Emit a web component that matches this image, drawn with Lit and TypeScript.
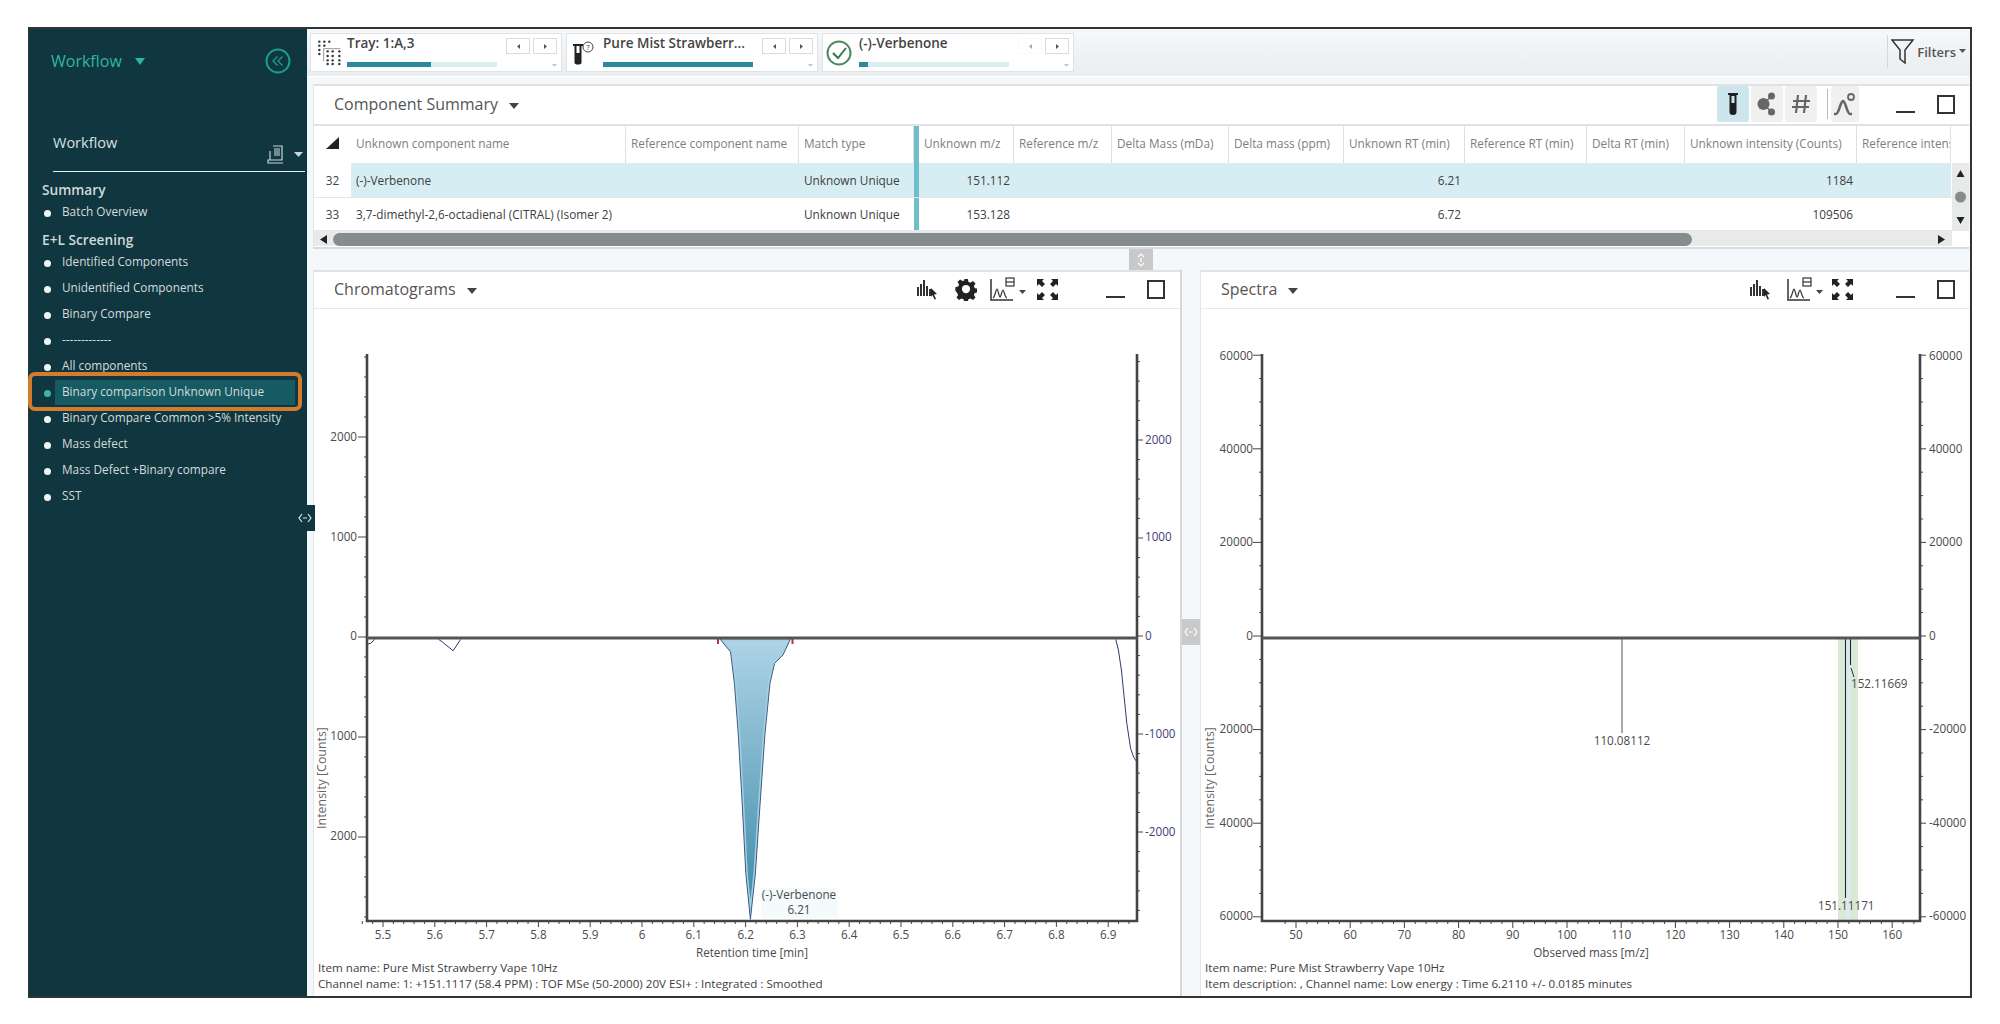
import { LitElement, html, css, svg } from "lit";
import { customElement } from "lit/decorators.js";

const FONT = css`"Open Sans", "Noto Sans", sans-serif`;

// table columns: width, label, align of the cell values
const columns = [
  { w: 275, label: "Unknown component name" },
  { w: 173, label: "Reference component name" },
  { w: 115, label: "Match type" },
  { w: 100, label: "Unknown m/z", teal: true },
  { w: 98, label: "Reference m/z" },
  { w: 117, label: "Delta Mass (mDa)" },
  { w: 115, label: "Delta mass (ppm)" },
  { w: 121, label: "Unknown RT (min)" },
  { w: 122, label: "Reference RT (min)" },
  { w: 98, label: "Delta RT (min)" },
  { w: 172, label: "Unknown intensity (Counts)" },
  { w: 94, label: "Reference intensity" },
];

const rows = [
  {
    num: "32",
    selected: true,
    h: 35,
    cells: ["(-)-Verbenone", "", "Unknown Unique", "151.112", "", "", "", "6.21", "", "", "1184", ""],
  },
  {
    num: "33",
    selected: false,
    h: 33,
    cells: ["3,7-dimethyl-2,6-octadienal (CITRAL) (Isomer 2)", "", "Unknown Unique", "153.128", "", "", "", "6.72", "", "", "109506", ""],
  },
];

const workflowItems = [
  "Identified Components",
  "Unidentified Components",
  "Binary Compare",
  "-------------",
  "All components",
  "Binary comparison Unknown Unique",
  "Binary Compare Common >5% Intensity",
  "Mass defect",
  "Mass Defect +Binary compare",
  "SST",
];

// helpers to turn zoomed reference readings into page coordinates
const pts = (list: number[][], ox: number, oy: number) =>
  list.map(([x, y]) => `${(ox + x / 2.613).toFixed(1)},${(oy + y / 3).toFixed(1)}`).join(" ");

const peak = pts(
  [
    [1097, 116], [1112, 138], [1125, 155], [1135, 250], [1145, 400], [1155, 600], [1165, 820], [1177, 958],
    [1190, 820], [1200, 650], [1215, 400], [1228, 250], [1240, 190], [1262, 165], [1282, 116],
  ],
  300,
  600
);
const dipA = pts([[175, 133], [185, 130], [195, 118]], 300, 600);
const dipB = pts([[362, 118], [372, 126], [400, 152], [420, 118]], 300, 600);
const riseEnd = pts(
  [[1243, 58], [1250, 90], [1258, 150], [1265, 230], [1272, 310], [1282, 385], [1290, 412], [1298, 425]],
  640,
  620
);

const vial = html`<svg width="10" height="24" viewBox="0 0 10 24">
  <path d="M0 1h10v2H8.500v17a3.500 3 0 0 1-7 0V3H0z" fill="#1f1f1f" />
  <rect x="3.500" y="4" width="3" height="7" fill="#cde5ec" />
</svg>`;

const barsCursor = html`<svg class="ic" width="22" height="21" viewBox="0 0 22 21">
  <path d="M1 8v9M4 5v12M7 1v16M10 7v10M13 10v7" stroke="#333" stroke-width="2" fill="none" />
  <path d="M14 9l6 6-3 .5 2 4.500-1.500.5-2-4.500-1.500 2z" fill="#222" />
</svg>`;

const chartIcon = html`<svg class="ic" width="36" height="24" viewBox="0 0 36 24">
  <path d="M1 2v21h22" stroke="#333" stroke-width="1.500" fill="none" />
  <path d="M3 21c2-1 3-9 4-9s2 8 3 8 2-7 3-7 2 8 4 8" stroke="#333" stroke-width="1.200" fill="none" />
  <rect x="16" y="1" width="8" height="8" fill="none" stroke="#333" stroke-width="1.200" />
  <path d="M16 5h8" stroke="#333" stroke-width="1.200" />
  <path d="M29 13h7l-3.500 4z" fill="#444" />
</svg>`;

const expandIcon = html`<svg class="ic" width="23" height="23" viewBox="0 0 23 23">
  <path d="M1 1h7l-2 2 3 3-3 3-3-3-2 2zM22 1h-7l2 2-3 3 3 3 3-3 2 2zM1 22h7l-2-2 3-3-3-3-3 3-2-2zM22 22h-7l2-2-3-3 3-3 3 3 2-2z" fill="#222" />
</svg>`;

const gear = html`<svg class="ic" width="22" height="24" viewBox="0 0 24 24">
  <path fill="#222" fill-rule="evenodd" d="M10 1h4l.6 3.100 2.300 1 2.700-1.800 2.800 2.800-1.800 2.700 1 2.300 3.100.6v4l-3.100.6-1 2.300 1.800 2.700-2.800 2.800-2.700-1.800-2.300 1-.6 3.100h-4l-.6-3.100-2.300-1-2.700 1.800-2.800-2.800 1.800-2.700-1-2.300L.4 14v-4l3.100-.6 1-2.300-1.800-2.700 2.800-2.800 2.700 1.800 2.300-1zM12 7.500a4.500 4.500 0 1 0 0 9 4.500 4.500 0 0 0 0-9z" />
</svg>`;

const windowBtns = (kind: string) => html`<span class="win ${kind}">
  <i class="min"></i>
  <i class="max"></i>
</span>`;

@customElement("nav-card")
class NavCard extends LitElement {
  static properties = {
    label: { type: String },
    fill: { type: Number },
    faded: { type: Boolean },
  };
  declare label: string;
  declare fill: number;
  declare faded: boolean;

  constructor() {
    super();
    this.label = "";
    this.fill = 0;
    this.faded = false;
  }

  static styles = css`
    :host {
      display: flex;
      width: 252px;
      height: 39px;
      box-sizing: border-box;
      background: #fff;
      border: 1px solid #dfe3e5;
      position: relative;
      font-family: ${FONT};
    }
    .icon {
      width: 36px;
      flex: none;
      display: flex;
      align-items: center;
      justify-content: center;
    }
    .body {
      display: flex;
      flex-direction: column;
      width: 150px;
      flex: none;
    }
    .label {
      font-size: 13.500px;
      line-height: 18px;
      font-weight: 600;
      color: #444;
      white-space: nowrap;
      height: 28px;
    }
    .track {
      height: 5px;
      background: #d8eef1;
    }
    .track i {
      display: block;
      height: 100%;
      background: #2b8a97;
    }
    .btns {
      display: flex;
      gap: 3px;
      padding: 4px 0 0 9px;
    }
    .btn {
      width: 24px;
      height: 16px;
      box-sizing: border-box;
      border: 1px solid #dcdcdc;
      background: #fff;
      display: flex;
      align-items: center;
      justify-content: center;
    }
    .btn.off {
      border-color: #f4f4f4;
      opacity: 0.5;
    }
    .drop {
      position: absolute;
      right: 3px;
      bottom: 3px;
    }
  `;

  render() {
    return html`
      <div class="icon"><slot></slot></div>
      <div class="body">
        <div class="label">${this.label}</div>
        <div class="track"><i style="width:${this.fill}%"></i></div>
      </div>
      <div class="btns">
        <span class="btn ${this.faded ? "off" : ""}">
          <svg width="5" height="7"><path d="M4 1v5L1 3.500z" fill="#555" /></svg>
        </span>
        <span class="btn">
          <svg width="5" height="7"><path d="M1 1v5l3-2.500z" fill="#555" /></svg>
        </span>
      </div>
      <svg class="drop" width="7" height="5"><path d="M1 1h5L3.500 4z" fill="#c4c8ca" /></svg>
    `;
  }
}

@customElement("app-root")
export class AppRoot extends LitElement {
  static styles = css`
    :host {
      display: block;
      width: 2000px;
      height: 1024px;
      background: #fff;
      font-family: ${FONT};
      overflow: hidden;
    }
    .frame {
      margin: 27px 0 0 28px;
      width: 1944px;
      height: 971px;
      box-sizing: border-box;
      border: 2px solid #333;
      border-left-width: 1px;
      display: flex;
    }
    .side {
      width: 278px;
      flex: none;
      background: #10363f;
      position: relative;
      color: #d2dcde;
      padding-left: 13px;
      box-sizing: border-box;
    }
    .side-top {
      display: flex;
      align-items: center;
      height: 64px;
      padding-left: 9px;
      color: #2fb5a3;
      font-size: 16px;
    }
    .side-top svg.car {
      margin-left: 13px;
    }
    .collapse {
      position: absolute;
      left: 236px;
      top: 19px;
    }
    .side-head {
      margin: 0 2px 0 11px;
      height: 79px;
      padding-top: 40px;
      box-sizing: border-box;
      border-bottom: 1.500px solid #e8eeee;
      font-size: 14.500px;
      line-height: 20px;
      color: #d8e0e1;
      position: relative;
    }
    .side-head svg {
      position: absolute;
      left: 214px;
      top: 51px;
    }
    .group {
      font-size: 13.700px;
      font-weight: 600;
      line-height: 20px;
      color: #cfdadb;
      margin-top: 8px;
    }
    .group.second {
      margin-bottom: -2px;
    }
    .item {
      display: flex;
      align-items: center;
      height: 26px;
      font-size: 11.800px;
      white-space: nowrap;
      position: relative;
    }
    .item.lead {
      height: 22px;
    }
    .item .dot {
      width: 7px;
      height: 7px;
      border-radius: 50%;
      background: #f2f5f5;
      margin: 4px 11px 0 2px;
      flex: none;
    }
    .item.active::before {
      content: "";
      position: absolute;
      left: 13px;
      right: 12px;
      top: 2px;
      height: 25px;
      background: #165a62;
    }
    .item.active::after {
      content: "";
      position: absolute;
      left: -14px;
      width: 274px;
      top: -6px;
      height: 39px;
      box-sizing: border-box;
      border: 4px solid #d37c2d;
      border-radius: 7px;
    }
    .item.active .dot {
      background: #3fb3a4;
      position: relative;
    }
    .item span {
      position: relative;
    }
    .handle {
      position: absolute;
      right: -8px;
      top: 476px;
      width: 20px;
      height: 26px;
      background: #10363f;
      display: flex;
      align-items: center;
      justify-content: center;
    }
    .main {
      flex: 1;
      min-width: 0;
      display: flex;
      flex-direction: column;
      background: #f5f8fa;
    }
    .toolbar {
      height: 47px;
      flex: none;
      box-sizing: border-box;
      padding: 4px 0 0 3px;
      display: flex;
      gap: 4px;
      background: linear-gradient(#f6f9fb, #e9edef);
      position: relative;
    }
    .filters {
      position: absolute;
      right: 4px;
      top: 6px;
      height: 33px;
      border-left: 1px solid #d4d8da;
      padding-left: 3px;
      display: flex;
      align-items: center;
      gap: 2px;
      font-size: 13px;
      font-weight: 600;
      color: #555;
    }
    .content {
      flex: 1;
      min-height: 0;
      padding: 7px 1px 0 6px;
      display: flex;
      flex-direction: column;
      border-top: 1px solid #fff;
    }
    .panel {
      background: #fff;
      border-top: 2px solid #e0e3e5;
      border-left: 1px solid #e3e5e7;
      display: flex;
      flex-direction: column;
      box-sizing: border-box;
    }
    .summary {
      height: 165px;
      flex: none;
      border-bottom: 2px solid #d8dbdd;
    }
    .phead {
      height: 38px;
      flex: none;
      display: flex;
      align-items: center;
      padding: 0 0 2px 20px;
      color: #555;
      font-size: 16px;
      position: relative;
      box-sizing: border-box;
    }
    .phead.line {
      border-bottom: 1px solid #e6e8e9;
      height: 37px;
    }
    .phead .car {
      margin-left: 11px;
      margin-top: 4px;
    }
    .tools {
      margin-left: auto;
      display: flex;
      align-items: center;
    }
    .ic {
      display: block;
    }
    .gap-8 {
      width: 8px;
    }
    .gap-10 {
      width: 10px;
    }
    .gap-13 {
      width: 13px;
    }
    .gap-15 {
      width: 15px;
    }
    .gap-16 {
      width: 16px;
    }
    .win {
      display: flex;
      align-items: center;
      gap: 22px;
      margin-right: 14px;
    }
    .win.top {
      margin-left: 35px;
    }
    .win.chrom-win {
      margin-left: 47px;
      margin-right: 15px;
    }
    .win.spec-win {
      margin-left: 42px;
    }
    .win .min {
      width: 19px;
      height: 2px;
      background: #333;
      margin-top: 15px;
    }
    .win .max {
      width: 14px;
      height: 15px;
      border: 2px solid #333;
      display: block;
    }
    .tbtn {
      width: 32px;
      height: 36px;
      margin-right: 2px;
      background: #f0f0f0;
      border-radius: 2px;
      display: flex;
      align-items: center;
      justify-content: center;
    }
    .tbtn.on {
      background: #cde5ec;
    }
    .tbtn.narrow {
      width: 28px;
    }
    .tsep {
      width: 1px;
      height: 30px;
      background: #bbb;
      margin: 0 3px 0 8px;
    }
    .table {
      position: relative;
      display: flex;
      flex-direction: column;
      flex: 1;
      min-height: 0;
      border-top: 2px solid #dfe2e4;
      overflow: hidden;
    }
    .tr {
      display: flex;
      align-items: center;
      flex: none;
    }
    .thead {
      height: 37px;
    }
    .tbody {
      border-bottom: 1px solid #e4e7e9;
      box-sizing: border-box;
    }
    .tbody.sel .cell {
      background: #d6eef3;
    }
    .num {
      width: 37px;
      flex: none;
      text-align: center;
      font-size: 11.800px;
      color: #444;
    }
    .th,
    .cell {
      flex: none;
      box-sizing: border-box;
      height: 100%;
      display: flex;
      align-items: center;
      white-space: nowrap;
      overflow: hidden;
      font-size: 11.800px;
      padding: 0 4px 0 5px;
    }
    .th {
      color: #7b7f82;
      border-right: 1px solid #dee1e3;
      padding-bottom: 3px;
    }
    .cell {
      color: #404040;
    }
    .cell.right {
      justify-content: flex-end;
    }
    .teal {
      border-left: 5px solid #6fbfca;
    }
    .sort {
      width: 37px;
      flex: none;
      display: flex;
      justify-content: center;
      padding-bottom: 3px;
    }
    .hbar {
      height: 15px;
      margin-right: 17px;
      background: #e8eaea;
      position: relative;
      flex: none;
    }
    .hbar .thumb {
      position: absolute;
      left: 19px;
      width: 1359px;
      top: 2px;
      height: 13px;
      background: #868c8e;
      border-radius: 7px;
    }
    .hbar svg {
      position: absolute;
      top: 4px;
    }
    .hbar .prev {
      left: 6px;
    }
    .hbar .next {
      right: 6px;
    }
    .vbar {
      position: absolute;
      right: 0;
      width: 17px;
      top: 37px;
      height: 68px;
      background: #e8eaea;
    }
    .split-h {
      height: 21px;
      flex: none;
      display: flex;
      justify-content: flex-start;
      padding-left: 816px;
    }
    .split-h span {
      width: 24px;
      height: 21px;
      background: #c9c9c9;
      display: flex;
      align-items: center;
      justify-content: center;
    }
    .bottom {
      flex: 1;
      min-height: 0;
      display: flex;
    }
    .chrom {
      width: 867px;
      flex: none;
    }
    .spec {
      flex: 1;
      min-width: 0;
    }
    .split-v {
      width: 20px;
      flex: none;
      border-left: 2px solid #d6d8da;
      box-sizing: border-box;
      padding-top: 349px;
    }
    .split-v span {
      display: flex;
      width: 18px;
      height: 26px;
      background: #c9c9c9;
      align-items: center;
      justify-content: center;
    }
    .plot {
      display: block;
      flex: none;
    }
    .plot text {
      font-family: ${FONT};
      font-size: 11.700px;
      fill: #4a4a4a;
    }
    .plot text.navy {
      fill: #3f3f7a;
    }
    .plot text.ytitle {
      font-size: 12.400px;
      fill: #666;
    }
    .info {
      font-size: 11.650px;
      line-height: 16px;
      color: #3e3e3e;
      white-space: nowrap;
      padding-left: 4px;
    }
  `;

  private sidebar() {
    return html`
      <aside class="side">
        <div class="side-top">
          Workflow
          <svg class="car" width="10" height="7"><path d="M0 0h10L5 7z" fill="#2fb5a3" /></svg>
        </div>
        <svg class="collapse" width="26" height="26" viewBox="0 0 26 26">
          <circle cx="13" cy="13" r="11.500" fill="none" stroke="#1c9c8e" stroke-width="2" />
          <path d="M12.500 8.500L8 13l4.500 4.500M17.500 8.500L13 13l4.500 4.500" fill="none" stroke="#1c9c8e" stroke-width="1.300" />
        </svg>
        <div class="side-head">
          Workflow
          <svg width="36" height="20" viewBox="0 0 36 20">
            <path d="M6 2h9v14H1v3h15" fill="none" stroke="#c9d5d7" stroke-width="1.200" />
            <path d="M3 7v9" stroke="#c9d5d7" stroke-width="1.200" />
            <rect x="7" y="4" width="6" height="8" fill="#73888c" />
            <path d="M27 8h9l-4.500 5z" fill="#c9d5d7" />
          </svg>
        </div>
        <div class="group">Summary</div>
        <div class="item lead"><i class="dot"></i><span>Batch Overview</span></div>
        <div class="group second">E+L Screening</div>
        ${workflowItems.map(
          (label, i) => html`<div class="item ${i === 5 ? "active" : ""}">
            <i class="dot"></i><span>${label}</span>
          </div>`
        )}
        <div class="handle">
          <svg width="14" height="10" viewBox="0 0 14 10">
            <path d="M4 1L1 5l3 4M10 1l3 4-3 4M5 5h4" fill="none" stroke="#dfe7e8" stroke-width="1.200" />
          </svg>
        </div>
      </aside>
    `;
  }

  private toolbar() {
    // tray icon: plate of dots, coordinates read off the zoomed reference
    const dots = [
      [25, 35], [40, 35], [55, 35],
      [25, 47], [40, 47],
      [25, 60], [25, 72],
      [50, 64], [65, 64], [85, 64],
      [50, 78], [65, 78], [85, 78],
      [50, 91], [65, 91], [85, 91],
      [50, 102], [65, 102], [85, 102],
    ];
    return html`
      <div class="toolbar">
        <nav-card label="Tray: 1:A,3" fill="56">
          <svg width="24" height="26" viewBox="18 30 72 78">
            ${dots.map(([x, y]) => svg`<circle cx=${x} cy=${y} r="3.600" fill="#333" />`)}
            <path d="M38 56h50M38 56v38" stroke="#333" stroke-width="1.500" fill="none" />
          </svg>
        </nav-card>
        <nav-card label="Pure Mist Strawberr..." fill="100">
          <svg width="26" height="24" viewBox="0 0 26 24">
            <path d="M1 3h10v2H9.500v16.500a3.500 2 0 0 1-7 0V5H1z" fill="#222" />
            <rect x="4.500" y="5" width="3" height="7" fill="#fff" />
            <circle cx="16" cy="6" r="5" fill="none" stroke="#444" />
            <text x="16" y="9" font-size="8" text-anchor="middle" fill="#333" font-family="Open Sans">?</text>
          </svg>
        </nav-card>
        <nav-card label="(-)-Verbenone" fill="6" faded>
          <svg width="26" height="26" viewBox="0 0 26 26" style="margin-right:4px">
            <circle cx="13" cy="13" r="11.500" fill="none" stroke="#4d8a5f" stroke-width="2" />
            <path d="M7 13l5 5 8-10" fill="none" stroke="#2e7a4a" stroke-width="2" />
          </svg>
        </nav-card>
        <div class="filters">
          <svg width="24" height="25" viewBox="0 0 24 25">
            <path d="M1 1h21l-8 10v13l-5-4v-9z" fill="none" stroke="#333" stroke-width="1.500" />
          </svg>
          Filters
          <svg width="7" height="5" style="margin-left:1px"><path d="M0 0h7L3.500 4z" fill="#555" /></svg>
        </div>
      </div>
    `;
  }

  private summary() {
    return html`
      <section class="panel summary">
        <div class="phead">
          Component Summary
          <svg class="car" width="10" height="6"><path d="M0 0h10L5 6z" fill="#444" /></svg>
          <div class="tools">
            <span class="tbtn on">${vial}</span>
            <span class="tbtn">
              <svg width="20" height="24" viewBox="0 0 20 24">
                <path d="M6 12L15 4M6 12l9 8" stroke="#666" stroke-width="1.500" />
                <circle cx="6.500" cy="12" r="6" fill="#666" />
                <circle cx="14.500" cy="4" r="3.500" fill="#666" />
                <circle cx="14.500" cy="20" r="3.500" fill="#666" />
              </svg>
            </span>
            <span class="tbtn">
              <svg width="20" height="24" viewBox="0 0 20 24">
                <path d="M7 3L5 21M15 3l-2 18M2 9h17M1 15h17" stroke="#666" stroke-width="2.200" fill="none" />
              </svg>
            </span>
            <span class="tsep"></span>
            <span class="tbtn narrow">
              <svg width="24" height="26" viewBox="0 0 24 26">
                <path d="M1 23h2c3 0 4-12 7-13 3 1 4 13 7 13h2" fill="none" stroke="#666" stroke-width="2.600" />
                <circle cx="18" cy="6" r="3" fill="none" stroke="#666" stroke-width="1.800" />
              </svg>
            </span>
            ${windowBtns("top")}
          </div>
        </div>
        <div class="table">
          <div class="tr thead">
            <span class="sort">
              <svg width="13" height="12"><path d="M13 0v12H0z" fill="#222" /></svg>
            </span>
            ${columns.map(
              (c) => html`<div class="th ${c.teal ? "teal" : ""}" style="width:${c.w}px">${c.label}</div>`
            )}
          </div>
          ${rows.map(
            (r) => html`<div class="tr tbody ${r.selected ? "sel" : ""}" style="height:${r.h}px">
              <span class="num">${r.num}</span>
              ${columns.map((c, i) => {
                const right = i >= 3;
                return html`<div
                  class="cell ${right ? "right" : ""} ${c.teal ? "teal" : ""}"
                  style="width:${c.w}px"
                >
                  ${r.cells[i]}
                </div>`;
              })}
            </div>`
          )}
          <div class="hbar">
            <svg class="prev" width="8" height="9"><path d="M7 0v9L0 4.500z" fill="#222" /></svg>
            <div class="thumb"></div>
            <svg class="next" width="8" height="9"><path d="M0 0v9l7-4.500z" fill="#222" /></svg>
          </div>
          <div class="vbar">
            <svg width="17" height="68" viewBox="0 0 17 68">
              <path d="M8.500 7l4 7h-8zM8.500 61l4-7h-8z" fill="#222" />
              <circle cx="8.500" cy="34" r="5.500" fill="#868c8e" />
            </svg>
          </div>
        </div>
      </section>
    `;
  }

  private chromPlot() {
    const x0 = 367;
    const x1 = 1137;
    const top = 354;
    const zero = 638;
    const bottom = 921;
    const leftTicks = [];
    for (let i = -14; i <= 14; i++) {
      const y = zero + i * 20 - 1;
      if (y < top || y > bottom) continue;
      const major = i % 5 === 0;
      leftTicks.push(svg`<path d="M${x0 - (major ? 9 : 3)} ${y}H${x0}" stroke="#444" />`);
    }
    const rightTicks = [];
    for (let i = -14; i <= 14; i++) {
      const y = 636 + i * 19.6;
      if (y < top || y > bottom) continue;
      const major = i % 5 === 0;
      rightTicks.push(svg`<path d="M${x1} ${y}h${major ? 6 : 3}" stroke="#444" />`);
    }
    const xTicks = [];
    for (let i = -2; i < 75; i++) {
      const x = 383 + i * 10.36;
      if (x > x1) break;
      const major = i % 5 === 0;
      xTicks.push(svg`<path d="M${x} ${bottom}v${major ? 6 : 3}" stroke="#444" />`);
    }
    const xLabels = ["5.5", "5.6", "5.7", "5.8", "5.9", "6", "6.1", "6.2", "6.3", "6.4", "6.5", "6.6", "6.7", "6.8", "6.9"];
    return html`<svg class="plot" width="866" height="651" viewBox="314 309 866 651">
      <defs>
        <linearGradient id="peakFill" x1="0" y1="0" x2="0" y2="1">
          <stop offset="0" stop-color="#aed4e7" />
          <stop offset="1" stop-color="#3a88a6" />
        </linearGradient>
        <clipPath id="peakClip"><polygon points=${peak} /></clipPath>
      </defs>
      <rect x="761" y="888" width="77" height="30" fill="#f5fafc" />
      <polygon points=${peak} fill="url(#peakFill)" />
      <polygon points=${peak} fill="none" stroke="#a6d0e4" stroke-width="4" clip-path="url(#peakClip)" />
      <polygon points=${peak} fill="none" stroke="#33507a" stroke-width="0.900" />
      <polyline points=${dipA} fill="none" stroke="#2a3a70" />
      <polyline points=${dipB} fill="none" stroke="#2a3a70" />
      <polyline points=${riseEnd} fill="none" stroke="#2a3a70" />
      <path d="M718 638v6M792.500 638v6" stroke="#b5363c" stroke-width="2" />
      <path d="M${x0} ${top}V${bottom}H${x1}V${top}" fill="none" stroke="#444" stroke-width="2.600" />
      <path d="M${x0} ${zero}H${x1}" stroke="#555" stroke-width="3" />
      ${leftTicks}${rightTicks}${xTicks}
      ${[
        ["2000", 441],
        ["1000", 541],
        ["0", 640],
        ["1000", 740],
        ["2000", 840],
      ].map(([t, y]) => svg`<text x="357" y=${y} text-anchor="end">${t}</text>`)}
      ${[
        ["2000", 444],
        ["1000", 541],
        ["0", 640],
        ["-1000", 738],
        ["-2000", 836],
      ].map(([t, y]) => svg`<text class="navy" x="1145" y=${y}>${t}</text>`)}
      ${xLabels.map(
        (t, i) => svg`<text x=${383 + i * 51.8} y="939" text-anchor="middle">${t}</text>`
      )}
      <text x="752" y="957" text-anchor="middle">Retention time [min]</text>
      <text x="799" y="899" text-anchor="middle">(-)-Verbenone</text>
      <text x="799" y="914" text-anchor="middle">6.21</text>
      <text class="ytitle" transform="translate(326 778) rotate(-90)" text-anchor="middle">Intensity [Counts]</text>
    </svg>`;
  }

  private specPlot() {
    const x0 = 1261;
    const x1 = 1919;
    const top = 354;
    const zero = 638;
    const bottom = 921;
    const ticks = [];
    for (let i = -12; i <= 12; i++) {
      const y = 636 + i * 23.4;
      if (y < top - 1 || y > bottom) continue;
      const major = i % 4 === 0;
      ticks.push(svg`<path d="M${x0 - (major ? 9 : 3)} ${y}H${x0}" stroke="#444" />`);
      ticks.push(svg`<path d="M${x1} ${y}h${major ? 6 : 3}" stroke="#444" />`);
    }
    const xTicks = [];
    for (let i = -1; i < 65; i++) {
      const x = 1295 + i * 10.84;
      if (x > x1) break;
      const major = i % 5 === 0;
      xTicks.push(svg`<path d="M${x} ${bottom}v${major ? 7 : 3}" stroke="#444" />`);
    }
    const xLabels = [50, 60, 70, 80, 90, 100, 110, 120, 130, 140, 150, 160];
    return html`<svg class="plot" width="769" height="651" viewBox="1200 309 769 651">
      <rect x="1837" y="638" width="20" height="283" fill="#d9e9d5" />
      <rect x="1844" y="638" width="6" height="283" fill="#dcebe9" />
      <path d="M1621 638V733" stroke="#6b6d80" stroke-width="1.200" />
      <path d="M1844.500 638V898M1849.500 638V665" stroke="#1c2c40" stroke-width="1.100" />
      <path d="M1850 668l3 9" stroke="#333" />
      <path d="M${x0} ${top}V${bottom}H${x1}V${top}" fill="none" stroke="#444" stroke-width="2.600" />
      <path d="M${x0} ${zero}H${x1}" stroke="#555" stroke-width="3" />
      ${ticks}${xTicks}
      ${[
        ["60000", 360],
        ["40000", 453],
        ["20000", 546],
        ["0", 640],
        ["20000", 733],
        ["40000", 827],
        ["60000", 920],
      ].map(([t, y]) => svg`<text x="1252" y=${y} text-anchor="end">${t}</text>`)}
      ${[
        ["60000", 360],
        ["40000", 453],
        ["20000", 546],
        ["0", 640],
        ["-20000", 733],
        ["-40000", 827],
        ["-60000", 920],
      ].map(([t, y]) => svg`<text x="1928" y=${y}>${t}</text>`)}
      ${xLabels.map(
        (t, i) => svg`<text x=${1295 + i * 54.2} y="939" text-anchor="middle">${t}</text>`
      )}
      <text x="1590" y="957" text-anchor="middle">Observed mass [m/z]</text>
      <text x="1621" y="745" text-anchor="middle">110.08112</text>
      <text x="1850" y="688">152.11669</text>
      <text x="1817" y="910">151.11171</text>
      <text class="ytitle" transform="translate(1213 778) rotate(-90)" text-anchor="middle">Intensity [Counts]</text>
    </svg>`;
  }

  render() {
    return html`
      <div class="frame">
        ${this.sidebar()}
        <main class="main">
          ${this.toolbar()}
          <div class="content">
            ${this.summary()}
            <div class="split-h">
              <span>
                <svg width="8" height="14" viewBox="0 0 8 14">
                  <path d="M1 4l3-3 3 3M1 10l3 3 3-3M4 5v4" fill="none" stroke="#fff" stroke-width="1.200" />
                </svg>
              </span>
            </div>
            <div class="bottom">
              <section class="panel chrom">
                <div class="phead line">
                  Chromatograms
                  <svg class="car" width="10" height="6"><path d="M0 0h10L5 6z" fill="#444" /></svg>
                  <div class="tools">
                    ${barsCursor}
                    <span class="gap-16"></span>${gear}
                    <span class="gap-13"></span>${chartIcon}
                    <span class="gap-10"></span>${expandIcon}
                    ${windowBtns("chrom-win")}
                  </div>
                </div>
                ${this.chromPlot()}
                <div class="info">
                  Item name: Pure Mist Strawberry Vape 10Hz<br />
                  Channel name: 1: +151.1117 (58.4 PPM) : TOF MSe (50-2000) 20V ESI+ : Integrated : Smoothed
                </div>
              </section>
              <div class="split-v">
                <span>
                  <svg width="14" height="10" viewBox="0 0 14 10">
                    <path d="M4 1L1 5l3 4M10 1l3 4-3 4M5 5h4" fill="none" stroke="#fff" stroke-width="1.200" />
                  </svg>
                </span>
              </div>
              <section class="panel spec">
                <div class="phead line">
                  Spectra
                  <svg class="car" width="10" height="6"><path d="M0 0h10L5 6z" fill="#444" /></svg>
                  <div class="tools">
                    ${barsCursor}
                    <span class="gap-15"></span>${chartIcon}
                    <span class="gap-8"></span>${expandIcon}
                    ${windowBtns("spec-win")}
                  </div>
                </div>
                ${this.specPlot()}
                <div class="info">
                  Item name: Pure Mist Strawberry Vape 10Hz<br />
                  Item description: , Channel name: Low energy : Time 6.2110 +/- 0.0185 minutes
                </div>
              </section>
            </div>
          </div>
        </main>
      </div>
    `;
  }
}
